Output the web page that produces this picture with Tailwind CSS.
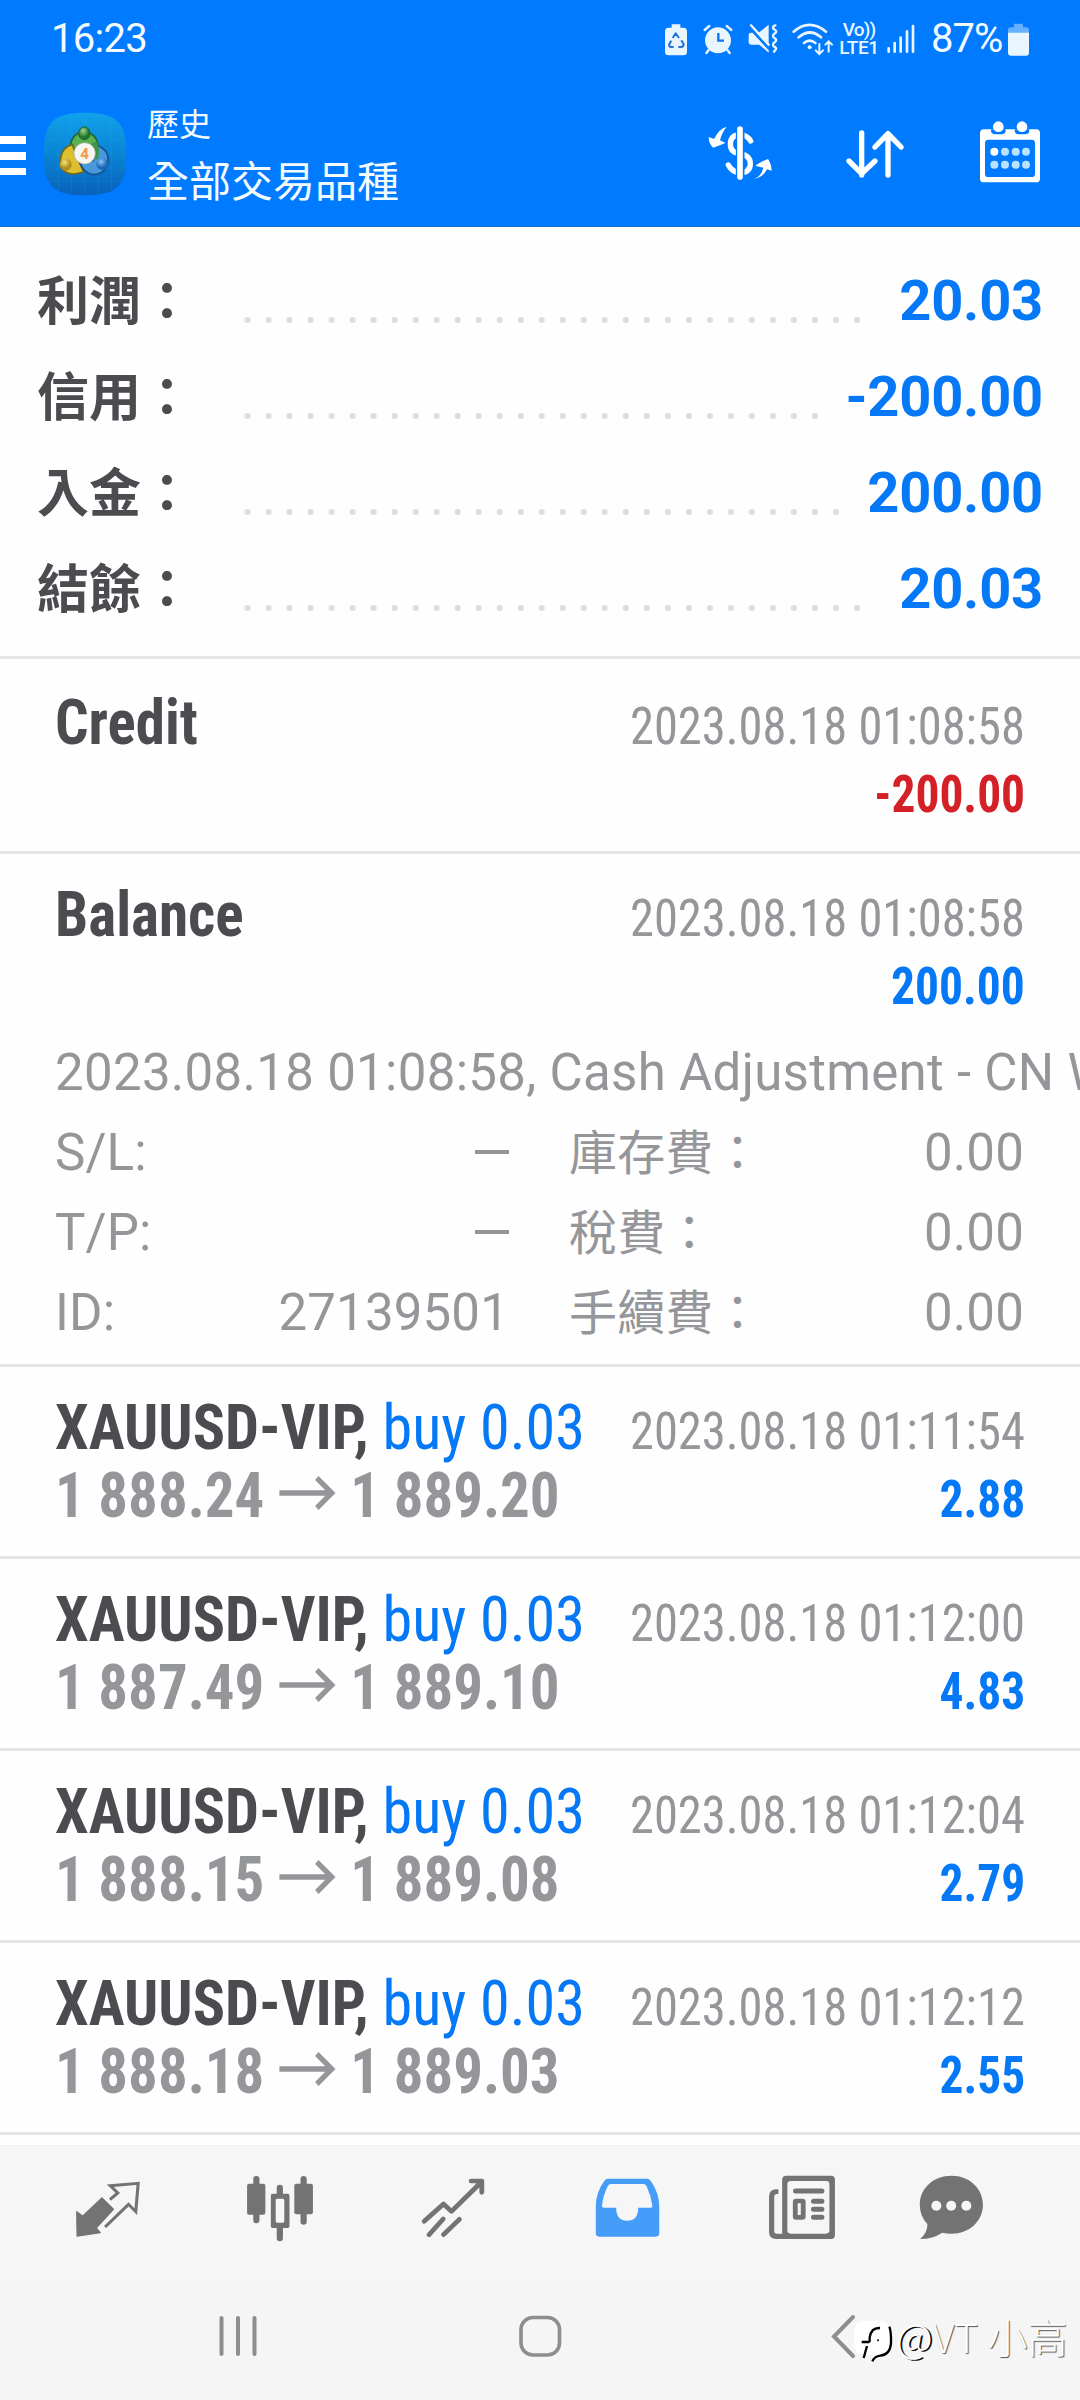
<!DOCTYPE html>
<html lang="zh-Hant">
<head>
<meta charset="utf-8">
<title>歷史</title>
<script src="https://cdn.jsdelivr.net/npm/@tailwindcss/browser@4"></script>
</head>
<body class="w-[1080px] h-[2400px] overflow-hidden bg-[#fefefe] font-['Roboto','Noto_Sans_CJK_TC',sans-serif] flex flex-col relative">

<header class="h-[227px] shrink-0 bg-[#007aff] border-b border-[#1a6cc4] text-[#f4fbff] flex flex-col">
  <!-- status bar -->
  <div class="h-[78px] shrink-0 flex items-center pl-[51px] leading-[78px]">
    <span class="text-[40px] w-[614px] tracking-[-0.7px]">16:23</span>
    <svg class="w-[22px] h-[33px]" viewBox="0 0 66 99"><path fill="#eaf6ff" d="M20 4h26v10h10q10 0 10 12v61q0 10-10 10H10Q0 97 0 87V26q0-12 10-12h10z"/><g fill="none" stroke="#2272d8" stroke-width="6" stroke-linejoin="round"><path d="M23 45l9-14 10 14M49 52l7 12q0 8-8 8h-8M26 72h-7q-9-1-6-9l6-10"/></g></svg>
    <svg class="w-[30px] h-[31px] ml-[16px]" viewBox="0 0 90 93" fill="none" stroke="#eaf6ff" stroke-width="7" stroke-linecap="round"><circle cx="45" cy="49" r="39" fill="#eaf6ff" stroke="none"/><path d="M5 18L19 6M71 6l14 12M17 78l-7 9M73 78l7 9"/><path d="M46 27v23h17" stroke="#0874ee" stroke-linecap="butt"/></svg>
    <svg class="w-[30px] h-[30px] ml-[15px]" viewBox="0 0 90 90"><path fill="#eaf6ff" d="M2 33q0-7 8-7h22L62 2v84L34 62H10q-8 0-8-7z"/><path d="M0 5l64 70" stroke="#007aff" stroke-width="8"/><g fill="none" stroke="#eaf6ff" stroke-width="7" stroke-linecap="round" stroke-linejoin="round"><path d="M9 4l53 58M82 4q-7 2-7 7 0 4 7 7 5 5 0 9-7 4-7 9t7 8q5 4 0 9-7 4-7 9t7 8q5 3 0 8l-4 5"/></g></svg>
    <svg class="w-[42px] h-[33px] ml-[14px]" viewBox="0 0 126 99" fill="none" stroke="#eaf6ff" stroke-width="8" stroke-linecap="round"><path d="M5 26q47-41 97 0M20 43q34-29 67 0M36 60q17-14 34 0"/><circle cx="53" cy="73" r="6" fill="#eaf6ff" stroke="none"/><path stroke-width="6" d="M82 63v29M71 82l11 11 11-11M110 86V56M100 65l10-10 10 10"/></svg>
    <div class="w-[42px] ml-[4px] flex flex-col items-center font-medium leading-[18px] text-[19px] text-[#eaf6ff]">
      <span class="whitespace-nowrap tracking-[-0.8px]">Vo))</span>
      <span class="whitespace-nowrap tracking-[-0.4px]">LTE1</span>
    </div>
    <svg class="w-[28px] h-[30px] ml-[7px]" viewBox="0 0 84 90" stroke="#eaf6ff" stroke-width="8" stroke-linecap="round"><path d="M5 73v10M23 57v26M41 41v42M60 22v61M78 6v77"/></svg>
    <span class="text-[40px] ml-[16px] w-[75px] whitespace-nowrap tracking-[-1px]">87%</span>
    <svg class="w-[21px] h-[33px] ml-[2px]" viewBox="0 0 63 99"><path fill="#66aefe" d="M18 2h27v11h10q8 0 8 9v8H0v-8q0-9 8-9h10z"/><path fill="#eaf6ff" d="M0 29h63v60q0 9-9 9H9q-9 0-9-9z"/></svg>
  </div>

  <!-- app bar -->
  <div class="flex-1 flex">
    <div class="flex flex-col gap-2 w-[26px] pt-[58px]">
      <i class="block h-[8px] bg-white"></i><i class="block h-[8px] bg-white"></i><i class="block h-[7px] bg-white"></i>
    </div>
    <svg class="w-[84px] h-[84px] ml-[17px] mt-[34px]" viewBox="0 0 252 252">
      <defs>
        <linearGradient id="bg" x1="0" y1="0" x2="0" y2="1"><stop offset="0" stop-color="#10a2ec"/><stop offset=".5" stop-color="#0a84d4"/><stop offset="1" stop-color="#0861ba"/></linearGradient>
        <radialGradient id="gr" cx=".4" cy=".3"><stop offset="0" stop-color="#9ad48c"/><stop offset="1" stop-color="#23762c"/></radialGradient>
        <radialGradient id="ye" cx=".4" cy=".3"><stop offset="0" stop-color="#f4e27a"/><stop offset="1" stop-color="#b08c18"/></radialGradient>
        <radialGradient id="bl" cx=".4" cy=".3"><stop offset="0" stop-color="#8cc8f6"/><stop offset="1" stop-color="#1c68b4"/></radialGradient>
      </defs>
      <path fill="url(#bg)" d="M126 2C222 2 250 30 250 126S222 250 126 250 2 222 2 126 30 2 126 2z"/>
      <path stroke="#45b4ee" stroke-opacity=".2" stroke-width="2" d="M46 16v220M86 6v240M126 4v244M166 6v240M206 16v220M16 46h220M6 86h240M4 127h244M6 168h240M16 208h220"/>
      <g stroke-linejoin="round">
        <path d="M82 104q4-42 42-44 38 3 42 44l-8 32-68-6z" fill="#58b050" stroke="#1e6434" stroke-width="5"/>
        <path d="M88 98q-34 8-36 50 2 38 42 38l28-6-18-40z" fill="#dcc030" stroke="#6e6a1c" stroke-width="5"/>
        <path d="M162 100q34 12 34 46-4 40-46 42-28-4-40-38l40-4z" fill="#4a98dc" stroke="#14508e" stroke-width="5"/>
        <path d="M144 96q8 24 2 44l18 2q8-28-2-54z" fill="#3c9444"/>
      </g>
      <ellipse cx="124" cy="64" rx="17" ry="19" fill="url(#gr)" stroke="#1c5c2c" stroke-width="3"/>
      <circle cx="68" cy="158" r="18" fill="url(#ye)"/>
      <circle cx="178" cy="156" r="18" fill="url(#bl)"/>
      <circle cx="125" cy="124" r="32" fill="#f8f6f2" stroke="#a8a89c" stroke-width="2"/>
      <text x="125" y="141" text-anchor="middle" font-family="Roboto" font-weight="700" font-size="46" fill="#f09a48">4</text>
    </svg>
    <div class="ml-[20px] pt-[23px] w-[561px] flex flex-col">
      <span class="text-[32px] leading-[48px]">歷史</span>
      <span class="text-[42px] leading-[68px]">全部交易品種</span>
    </div>
    <svg class="w-[64px] h-[56px] mt-[47px]" viewBox="0 0 192 168">
      <g fill="none" stroke="#fff" stroke-width="16"><path stroke-linecap="round" d="M128 48q-10-18-33-20-28 3-28 29t28 29q32 5 32 30 0 26-32 28-24-4-34-24"/></g>
      <path d="M87 0v168M106 0v168" stroke="#007aff" stroke-width="7"/>
      <path d="M96 12v144" stroke="#fff" stroke-width="17" stroke-linecap="round"/>
      <path fill="#fff" d="M56 5Q34 10 18 42L2 36q0 22 14 32 18-6 36-14l-16-8Q42 22 56 5zM138 162q22-8 28-34l-24-6q20-14 38-20 10 14 11 35l-14-4q-10 22-39 29z"/>
    </svg>
    <svg class="w-[60px] h-[50px] ml-[73px] mt-[51px]" viewBox="0 0 180 150" fill="none" stroke="#fff" stroke-width="16" stroke-linecap="round" stroke-linejoin="round"><path d="M50 12v126M12 96l38 38 40-38M129 138V14M90 54l39-40 39 40"/></svg>
    <svg class="w-[62px] h-[62px] ml-[74px] mt-[43px]" viewBox="0 0 186 186">
      <path fill="#fff" fill-rule="evenodd" d="M14 25h158q11 0 11 12v136q0 11-11 11H14q-11 0-11-11V37q0-12 11-12zM28 56q-10 0-10 10v92q0 10 10 10h130q10 0 10-10V66q0-10-10-10z"/>
      <path fill="#007aff" d="M36 25h44v2q0 13-12 13H48q-12 0-12-13zM107 25h44v2q0 13-12 13h-20q-12 0-12-13z"/>
      <g fill="#fff"><circle cx="58" cy="17" r="16"/><circle cx="129" cy="17" r="16"/><circle cx="46" cy="92" r="12"/></g>
      <g fill="#b8e2ff"><circle cx="78" cy="92" r="12"/><circle cx="110" cy="92" r="12"/><circle cx="141" cy="92" r="12"/><circle cx="46" cy="131" r="12"/><circle cx="78" cy="131" r="12"/><circle cx="110" cy="131" r="12"/><circle cx="141" cy="131" r="12"/></g>
    </svg>
  </div>
</header>

<!-- account summary -->
<section class="h-[432px] shrink-0 border-b-[3px] border-[#e5e5e5] pt-[26px] pl-[37px] pr-[37px] font-bold text-[#4b4b50] text-[52px] leading-[96px]">
  <div class="h-[96px] flex items-baseline">
    <span class="w-[200px] whitespace-nowrap">利潤：</span>
    <i class="w-[630px] h-[6px] translate-y-[3px] bg-[radial-gradient(circle,#dedede_2.8px,transparent_3.5px)] bg-[length:21.02px_6px] bg-repeat-x"></i>
    <span class="flex-1 text-right text-[56px] tracking-[-0.2px] text-[#0578f5]">20.03</span>
  </div>
  <div class="h-[96px] flex items-baseline">
    <span class="w-[200px] whitespace-nowrap">信用：</span>
    <i class="w-[588px] h-[6px] translate-y-[3px] bg-[radial-gradient(circle,#dedede_2.8px,transparent_3.5px)] bg-[length:21.02px_6px] bg-repeat-x"></i>
    <span class="flex-1 text-right text-[56px] tracking-[-0.2px] text-[#0578f5]">-200.00</span>
  </div>
  <div class="h-[96px] flex items-baseline">
    <span class="w-[200px] whitespace-nowrap">入金：</span>
    <i class="w-[609px] h-[6px] translate-y-[3px] bg-[radial-gradient(circle,#dedede_2.8px,transparent_3.5px)] bg-[length:21.02px_6px] bg-repeat-x"></i>
    <span class="flex-1 text-right text-[56px] tracking-[-0.2px] text-[#0578f5]">200.00</span>
  </div>
  <div class="h-[96px] flex items-baseline">
    <span class="w-[200px] whitespace-nowrap">結餘：</span>
    <i class="w-[630px] h-[6px] translate-y-[3px] bg-[radial-gradient(circle,#dedede_2.8px,transparent_3.5px)] bg-[length:21.02px_6px] bg-repeat-x"></i>
    <span class="flex-1 text-right text-[56px] tracking-[-0.2px] text-[#0578f5]">20.03</span>
  </div>
</section>

<!-- history list -->
<main class="shrink-0 h-[1486px] overflow-hidden text-[#959699] leading-[68px]">
  <article class="h-[195px] border-b-[3px] border-[#e5e5e5] pt-[30px] px-[55px] font-stretch-condensed whitespace-nowrap">
    <div class="h-[68px] flex items-baseline justify-between"><span class="text-[63px] origin-left scale-x-[0.935] font-bold text-[#4b4b50]">Credit</span><span class="text-[51px] origin-right scale-x-[0.952]">2023.08.18 01:08:58</span></div>
    <div class="h-[68px] flex items-baseline justify-between font-bold"><span class="text-[63px]">&nbsp;</span><span class="text-[51px] origin-right scale-x-[0.93] text-[#d42027]">-200.00</span></div>
  </article>
  <article class="h-[513px] border-b-[3px] border-[#e5e5e5] pt-[27px] pl-[55px] whitespace-nowrap">
    <div class="pr-[55px] font-stretch-condensed">
      <div class="h-[68px] flex items-baseline justify-between"><span class="text-[63px] origin-left scale-x-[0.94] font-bold text-[#4b4b50]">Balance</span><span class="text-[51px] origin-right scale-x-[0.952]">2023.08.18 01:08:58</span></div>
      <div class="h-[68px] flex items-baseline justify-between font-bold"><span class="text-[63px]">&nbsp;</span><span class="text-[51px] origin-right scale-x-[0.93] text-[#0578f5]">200.00</span></div>
    </div>
    <p class="mt-[16px] text-[51px] leading-[80px] tracking-[0.3px] overflow-hidden">2023.08.18 01:08:58, Cash Adjustment - CN Withdraw</p>
    <div class="grid grid-cols-[454px_455px] gap-x-[60px] text-[51px] leading-[80px] tracking-[0.15px]">
      <div class="h-[80px] flex items-center justify-between"><span>S/L:</span><i class="w-[34px] h-[4px] -mt-[2px] bg-[#959699]"></i></div>
      <div class="h-[80px] flex items-baseline justify-between"><span class="text-[48px]">庫存費：</span><span>0.00</span></div>
      <div class="h-[80px] flex items-center justify-between"><span>T/P:</span><i class="w-[34px] h-[4px] -mt-[2px] bg-[#959699]"></i></div>
      <div class="h-[80px] flex items-baseline justify-between"><span class="text-[48px]">稅費：</span><span>0.00</span></div>
      <div class="h-[80px] flex items-baseline justify-between"><span>ID:</span><span>27139501</span></div>
      <div class="h-[80px] flex items-baseline justify-between"><span class="text-[48px]">手續費：</span><span>0.00</span></div>
    </div>
  </article>
  <article class="h-[192px] border-b-[3px] border-[#e5e5e5] pt-[27px] px-[55px] font-stretch-condensed whitespace-nowrap">
    <div class="h-[68px] flex items-baseline justify-between"><span class="text-[63px] origin-left scale-x-[0.954] text-[#0578f5]"><b class="font-bold text-[#4b4b50]">XAUUSD-VIP,</b> buy 0.03</span><span class="text-[51px] origin-right scale-x-[0.952]">2023.08.18 01:11:54</span></div>
    <div class="h-[68px] flex items-baseline justify-between font-bold"><span class="text-[63px] origin-left scale-x-[0.935]">1 888.24<svg class="inline-block align-baseline mx-[14px] w-[64px] h-[42px]" viewBox="0 0 64 42" fill="none" stroke="#959699" stroke-width="5.5"><path d="M2 18h56M42 3l16 15-16 15"/></svg>1 889.20</span><span class="text-[51px] origin-right scale-x-[0.93] text-[#0578f5]">2.88</span></div>
  </article>
  <article class="h-[192px] border-b-[3px] border-[#e5e5e5] pt-[27px] px-[55px] font-stretch-condensed whitespace-nowrap">
    <div class="h-[68px] flex items-baseline justify-between"><span class="text-[63px] origin-left scale-x-[0.954] text-[#0578f5]"><b class="font-bold text-[#4b4b50]">XAUUSD-VIP,</b> buy 0.03</span><span class="text-[51px] origin-right scale-x-[0.952]">2023.08.18 01:12:00</span></div>
    <div class="h-[68px] flex items-baseline justify-between font-bold"><span class="text-[63px] origin-left scale-x-[0.935]">1 887.49<svg class="inline-block align-baseline mx-[14px] w-[64px] h-[42px]" viewBox="0 0 64 42" fill="none" stroke="#959699" stroke-width="5.5"><path d="M2 18h56M42 3l16 15-16 15"/></svg>1 889.10</span><span class="text-[51px] origin-right scale-x-[0.93] text-[#0578f5]">4.83</span></div>
  </article>
  <article class="h-[192px] border-b-[3px] border-[#e5e5e5] pt-[27px] px-[55px] font-stretch-condensed whitespace-nowrap">
    <div class="h-[68px] flex items-baseline justify-between"><span class="text-[63px] origin-left scale-x-[0.954] text-[#0578f5]"><b class="font-bold text-[#4b4b50]">XAUUSD-VIP,</b> buy 0.03</span><span class="text-[51px] origin-right scale-x-[0.952]">2023.08.18 01:12:04</span></div>
    <div class="h-[68px] flex items-baseline justify-between font-bold"><span class="text-[63px] origin-left scale-x-[0.935]">1 888.15<svg class="inline-block align-baseline mx-[14px] w-[64px] h-[42px]" viewBox="0 0 64 42" fill="none" stroke="#959699" stroke-width="5.5"><path d="M2 18h56M42 3l16 15-16 15"/></svg>1 889.08</span><span class="text-[51px] origin-right scale-x-[0.93] text-[#0578f5]">2.79</span></div>
  </article>
  <article class="h-[192px] border-b-[3px] border-[#e5e5e5] pt-[27px] px-[55px] font-stretch-condensed whitespace-nowrap">
    <div class="h-[68px] flex items-baseline justify-between"><span class="text-[63px] origin-left scale-x-[0.954] text-[#0578f5]"><b class="font-bold text-[#4b4b50]">XAUUSD-VIP,</b> buy 0.03</span><span class="text-[51px] origin-right scale-x-[0.952]">2023.08.18 01:12:12</span></div>
    <div class="h-[68px] flex items-baseline justify-between font-bold"><span class="text-[63px] origin-left scale-x-[0.935]">1 888.18<svg class="inline-block align-baseline mx-[14px] w-[64px] h-[42px]" viewBox="0 0 64 42" fill="none" stroke="#959699" stroke-width="5.5"><path d="M2 18h56M42 3l16 15-16 15"/></svg>1 889.03</span><span class="text-[51px] origin-right scale-x-[0.93] text-[#0578f5]">2.55</span></div>
  </article>
</main>

<!-- tab bar -->
<nav class="h-[135px] shrink-0 bg-[#f6f6f6] border-t border-[#f1f1f1] pt-[28px] pl-[73px] flex">
  <svg class="w-[70px] h-[70px]" viewBox="211 163 203 210" preserveAspectRatio="none">
    <path fill="#737373" stroke="#737373" stroke-width="4" stroke-linejoin="round" d="M295 235l33 34-50 56 12 14-67 10-1-73 17 14z"/>
    <path fill="none" stroke="#737373" stroke-width="9" d="M318 240l23-20-22-22 81-7-7 85-21-22-68 68"/>
  </svg>
  <svg class="w-[70px] h-[70px] ml-[102px]" viewBox="712 163 203 210" preserveAspectRatio="none">
    <g fill="none" stroke="#737373" stroke-width="18" stroke-linecap="round"><path d="M745 178v124M882 178v128M813 204v20M813 320v36"/></g>
    <g fill="#737373"><rect x="718" y="192" width="53" height="93" rx="6"/><rect x="855" y="192" width="54" height="92" rx="6"/><path fill-rule="evenodd" d="M792 222h44q5 0 5 6v92q0 5-5 5h-44q-5 0-5-5v-92q0-6 5-6zM805 237q-4 0-4 5v62q0 5 4 5h17q4 0 4-5v-62q0-5-4-5z"/></g>
  </svg>
  <svg class="w-[70px] h-[70px] ml-[103px]" viewBox="1214 163 203 210" preserveAspectRatio="none" fill="none" stroke="#737373" stroke-width="14" stroke-linecap="round" stroke-linejoin="round"><path d="M1232 305l56-52 23 22 84-85M1368 184h31v34M1246 345l41-47M1288 345l46-46"/></svg>
  <svg class="w-[70px] h-[70px] ml-[104px]" viewBox="151 163 203 210" preserveAspectRatio="none"><path fill="#459cf9" fill-rule="evenodd" d="M196 177h116q6 0 10 8 24 36 24 76v80q0 10-10 10H172q-10 0-10-10v-80q0-42 24-76 4-8 10-8zM206 193q-6 0-9 6-14 28-17 59 0 6 5 6h36q0 39 32 39t32-39h37q5 0 4-6-4-31-17-59-3-6-9-6z"/></svg>
  <svg class="w-[70px] h-[70px] ml-[105px]" viewBox="658 163 203 210" preserveAspectRatio="none">
    <path fill="#737373" fill-rule="evenodd" d="M714 168h130q11 0 11 12v167q0 11-11 11H685q-21 0-21-20V230q0-20 21-21h6v14h-6q-6 1-6 8v104q0 7 6 7h17V180q0-12 12-12zM727 184q-10 0-10 10v138q0 10 10 10h102q10 0 10-10V194q0-10-10-10z"/>
    <path stroke="#737373" stroke-width="15" stroke-linecap="round" d="M741 214h76M793 245h24M793 269h24M793 293h24"/>
    <rect x="740" y="244" width="23" height="49" rx="2" fill="none" stroke="#737373" stroke-width="14"/>
  </svg>
  <svg class="w-[70px] h-[70px] ml-[79px]" viewBox="1091 163 203 210" preserveAspectRatio="none"><path fill="#737373" d="M1194 168c52 0 91 38 91 87s-39 87-91 87q-14 0-27-3-28 19-64 19 22-20 21-45-22-23-22-58c0-49 39-87 92-87z"/><g fill="#f6f6f6"><ellipse cx="1150" cy="258" rx="14.500" ry="15"/><ellipse cx="1193" cy="258" rx="14.500" ry="15"/><ellipse cx="1237" cy="258" rx="14.500" ry="15"/></g></svg>
</nav>

<!-- system navigation -->
<div class="h-[120px] shrink-0 bg-[#f5f5f5] flex items-start pt-[34px]">
  <svg class="w-[38px] h-[44px] ml-[219px]" viewBox="0 0 38 44" stroke="#8e8e8e" stroke-width="4" stroke-linecap="round"><path d="M2.500 4v36M19 4v36M35.500 4v36"/></svg>
  <svg class="w-[44px] h-[44px] ml-[261px]" viewBox="0 0 44 44" fill="none" stroke="#8e8e8e" stroke-width="3.600"><rect x="3" y="3.500" width="38.500" height="37.500" rx="12"/></svg>
  <svg class="w-[28px] h-[46px] ml-[268px]" viewBox="0 0 28 46" fill="none" stroke="#8e8e8e" stroke-width="4" stroke-linecap="round"><path d="M23 3L4 22.500 23 42"/></svg>
</div>

<!-- watermark -->
<div class="absolute left-[852px] top-[2316px] flex items-start h-[48px]">
  <svg class="w-[44px] h-[48px]" viewBox="0 0 132 144"><path fill="#fff" d="M36 14h50q28 2 30 36v28q0 36-34 38-12 4-16 14l-6-14H36Q8 116 6 78V50q2-34 30-36z"/><g fill="none" stroke="#000"><path stroke-width="7" d="M84 36q-26-2-31 28v14M29 78h24M45 90l-10 36"/><path stroke-width="7" d="M112 32q6 16 5 50-3 34-32 37-18 2-24 17"/></g><circle cx="78" cy="73" r="3"/></svg>
  <span class="text-[40px] leading-[40px] tracking-[0.2px] whitespace-nowrap font-['Noto_Sans_CJK_TC','Noto_Sans',sans-serif] font-light text-white [text-shadow:1px_1px_1px_#555]"><span class="[text-shadow:2px_1px_0_#111]">@</span>VT 小高</span>
</div>

</body>
</html>
